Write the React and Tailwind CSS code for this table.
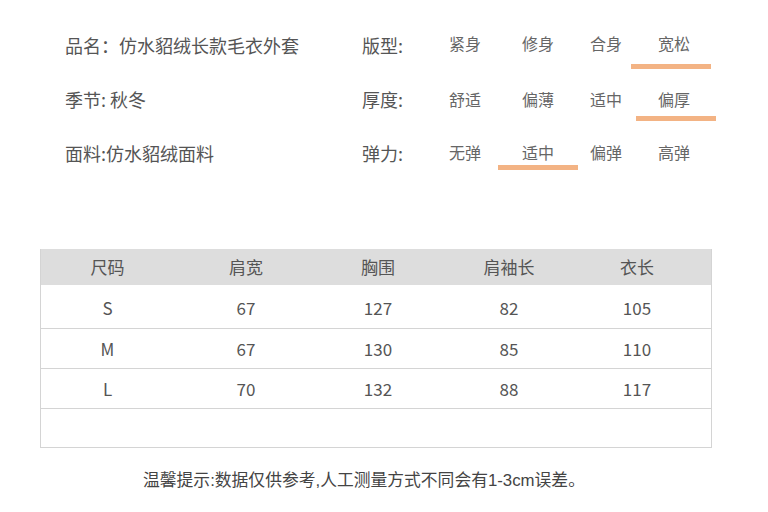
const font = { fontFamily: '"Noto Sans CJK SC", "Noto Sans", sans-serif' };

const attrs = [
  { info: '品名：仿水貂绒长款毛衣外套', label: '版型:', options: ['紧身', '修身', '合身', '宽松'], pick: 3, optPad: 'pt-[15px]', barGap: 'mt-[11px]', barShift: '-ml-[27px]' },
  { info: '季节: 秋冬', label: '厚度:', options: ['舒适', '偏薄', '适中', '偏厚'], pick: 3, optPad: 'pt-[17px]', barGap: 'mt-[7px]', barShift: '-ml-[22px]' },
  { info: '面料:仿水貂绒面料', label: '弹力:', options: ['无弹', '适中', '偏弹', '高弹'], pick: 1, optPad: 'pt-[16px]', barGap: 'mt-[3px]', barShift: '-ml-[24px]' },
];

const cellWidths = ['w-[73px]', 'w-[68px]', 'w-[68px]', 'w-[60px]'];

const rows = [
  ['S', '67', '127', '82', '105'],
  ['M', '67', '130', '85', '110'],
  ['L', '70', '132', '88', '117'],
];

const colWidths = ['w-[133px]', 'w-[144px]', 'w-[120px]', 'w-[142px]', 'w-[114px]'];

function AttrRow({ item }) {
  return (
    <div className="flex h-[54px] items-start">
      <div className="ml-[65px] w-[297px] pt-[15px] text-[18px] leading-[24px] text-[#555]">{item.info}</div>
      <div className="w-[87px] pt-[15px] text-[18px] leading-[24px] text-[#555]">{item.label}</div>
      {item.options.map((opt, i) => (
        <div key={opt} className={`${cellWidths[i]} flex flex-col items-start ${item.optPad}`}>
          <span className="text-[16px] leading-[20px] text-[#666]">{opt}</span>
          {i === item.pick && <span className={`block h-[5px] w-[80px] bg-[#f3b384] ${item.barGap} ${item.barShift}`} />}
        </div>
      ))}
    </div>
  );
}

export default function App() {
  return (
    <div className="h-[512px] w-[768px] overflow-hidden bg-white" style={font}>
      <div className="pt-[18px]">
        {attrs.map((item) => <AttrRow key={item.label} item={item} />)}
      </div>

      <div className="ml-[40px] mt-[69px] w-[672px] border-x border-b border-[#d4d4d4] text-[17px] text-[#555]">
        <div className="flex h-[36px] items-center bg-[#dddddd]">
          {['尺码', '肩宽', '胸围', '肩袖长', '衣长'].map((h, i) => <div key={h} className={`${colWidths[i]} text-center`}>{h}</div>)}
        </div>
        {rows.map((r, ri) => (
          <div key={r[0]} className={`flex items-center border-b border-[#d4d4d4] ${ri === 0 ? 'h-[44px] pt-[2px]' : 'h-[40px] pt-[1px]'}`}>
            {r.map((v, i) => <div key={i} className={`${colWidths[i]} text-center`}>{v}</div>)}
          </div>
        ))}
        <div className="h-[38px]" />
      </div>

      <p className="mt-[21px] whitespace-nowrap pl-[143px] text-[16.8px] leading-[24px] text-[#444]" style={{ fontFamily: '"Liberation Sans", "Noto Sans CJK SC", sans-serif' }}>温馨提示:数据仅供参考,人工测量方式不同会有1-3cm误差。</p>
    </div>
  );
}
